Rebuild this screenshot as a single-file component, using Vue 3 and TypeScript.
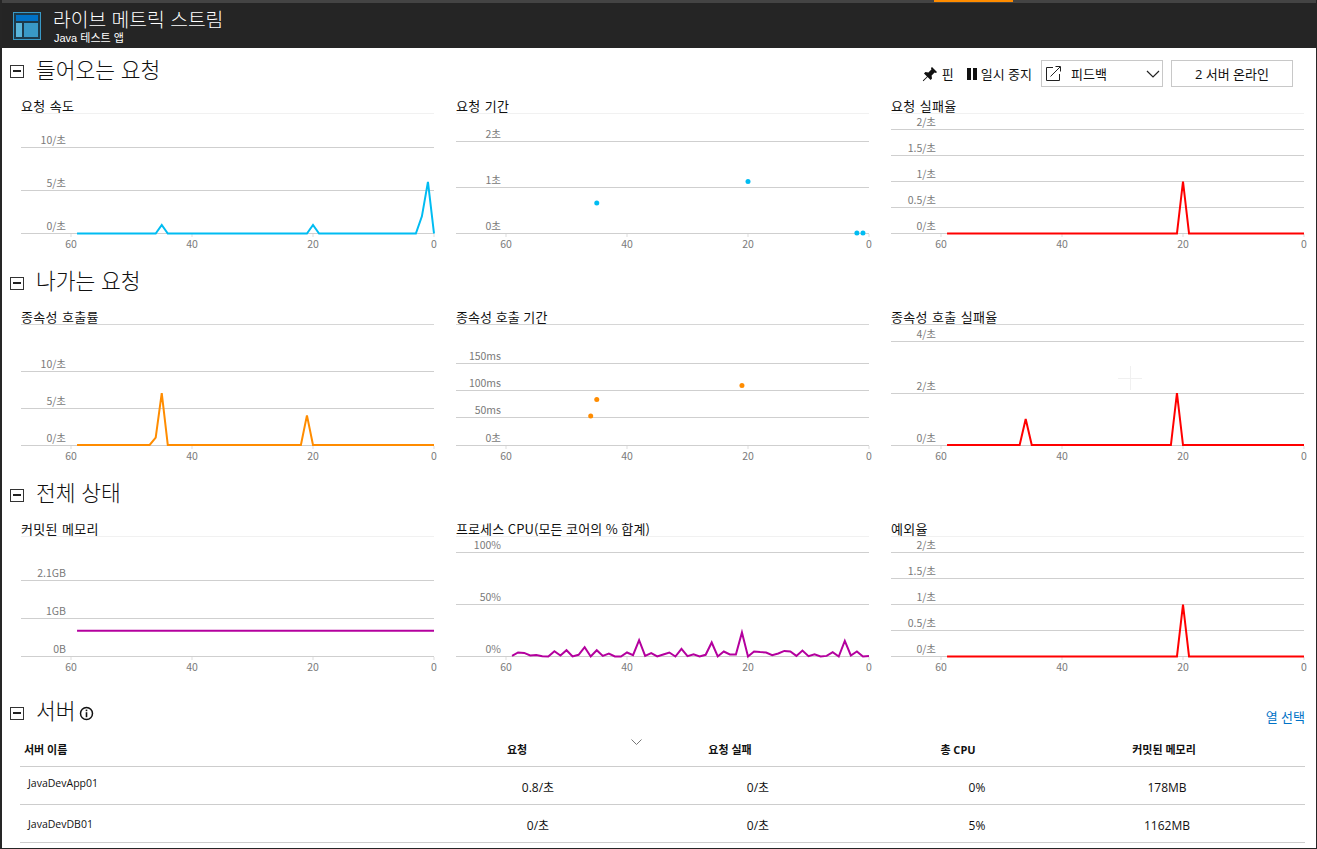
<script setup lang="ts">
interface GridLine {
  label: string;
  y: number;
}
interface Chart {
  title: string;
  tone: string;
  color: string;
  grid: GridLine[];
  line?: string;
  dots?: number[][];
}

const ticks = [60, 40, 20, 0];
const tx = (t: number) => 413 - t * 6.05;

// 값 배열(60개, 59초 전 -> 현재)을 폴리라인 좌표로 바꾼다
function toLine(values: Record<number, number>, base: number, unit: number): string {
  const pts: string[] = [];
  for (let t = 59; t >= 0; t--) {
    pts.push(`${tx(t).toFixed(2)},${(base - (values[t] ?? 0) * unit).toFixed(1)}`);
  }
  return pts.join(" ");
}

const cpu = [
  0.6, 3.8, 3.5, 1, 1.3, 0.3, 0, 5.1, 1, 6.1, 0, 1.6, 9, 0, 6.1, 0.6, 2.9, 0, 0, 3.8, 1.3, 15.7, 0.6, 3.2, 0, 1.9,
  3.8, 0, 7.4, 0.3, 2.2, 0, 1.6, 13.5, 0, 4.8, 1.9, 1.9, 23.1, 0, 4.8, 4.2, 3.8, 1.3, 2.9, 5.4, 4.8, 0.6, 5.8, 0.3,
  2.2, 0, 0.6, 4.2, 0, 15, 1, 4.8, 0, 0.6,
];
const cpuValues: Record<number, number> = {};
cpu.forEach((v, i) => {
  cpuValues[59 - i] = v;
});

const flat: Record<number, number> = {};
for (let t = 0; t < 60; t++) flat[t] = 1;

const rateGrid = (top: number): GridLine[] => [
  { label: "2/초", y: top },
  { label: "1.5/초", y: top + 26 },
  { label: "1/초", y: top + 52 },
  { label: "0.5/초", y: top + 78 },
  { label: "0/초", y: top + 104 },
];

const sections: { name: string; cls: string; charts: Chart[] }[] = [
  {
    name: "들어오는 요청",
    cls: "sec-first",
    charts: [
      {
        title: "요청 속도",
        tone: "faint",
        color: "#00bcf2",
        grid: [
          { label: "10/초", y: 33 },
          { label: "5/초", y: 76 },
          { label: "0/초", y: 119 },
        ],
        line: toLine({ 45: 1, 20: 1, 2: 2, 1: 6 }, 119.5, 8.6),
      },
      {
        title: "요청 기간",
        tone: "faint",
        color: "#00bcf2",
        grid: [
          { label: "2초", y: 27 },
          { label: "1초", y: 73 },
          { label: "0초", y: 119 },
        ],
        dots: [
          [45, 89],
          [20, 67.5],
          [2, 119],
          [1, 119],
        ],
      },
      {
        title: "요청 실패율",
        tone: "faint",
        color: "#ff0000",
        grid: rateGrid(15),
        line: toLine({ 20: 1 }, 119.5, 52),
      },
    ],
  },
  {
    name: "나가는 요청",
    cls: "sec-second",
    charts: [
      {
        title: "종속성 호출률",
        tone: "solid",
        color: "#ff8c00",
        grid: [
          { label: "10/초", y: 46 },
          { label: "5/초", y: 83 },
          { label: "0/초", y: 120 },
        ],
        line: toLine({ 46: 1, 45: 7, 21: 4 }, 120, 7.4),
      },
      {
        title: "종속성 호출 기간",
        tone: "solid tight",
        color: "#ff8c00",
        grid: [
          { label: "150ms", y: 38 },
          { label: "100ms", y: 65 },
          { label: "50ms", y: 92 },
          { label: "0초", y: 120 },
        ],
        dots: [
          [45, 74.5],
          [46, 91],
          [21, 60.5],
        ],
      },
      {
        title: "종속성 호출 실패율",
        tone: "solid",
        color: "#ff0000",
        grid: [
          { label: "4/초", y: 16 },
          { label: "2/초", y: 68 },
          { label: "0/초", y: 120 },
        ],
        line: toLine({ 46: 1, 21: 2 }, 120, 26),
      },
    ],
  },
  {
    name: "전체 상태",
    cls: "sec-third",
    charts: [
      {
        title: "커밋된 메모리",
        tone: "faint",
        color: "#b4009e",
        grid: [
          { label: "2.1GB", y: 43 },
          { label: "1GB", y: 81 },
          { label: "0B", y: 119 },
        ],
        line: toLine(flat, 93.7, 0),
      },
      {
        title: "프로세스 CPU(모든 코어의 % 합계)",
        tone: "faint tight",
        color: "#b4009e",
        grid: [
          { label: "100%", y: 15 },
          { label: "50%", y: 67 },
          { label: "0%", y: 119 },
        ],
        line: toLine(cpuValues, 119.5, 1.04),
      },
      {
        title: "예외율",
        tone: "faint",
        color: "#ff0000",
        grid: rateGrid(15),
        line: toLine({ 20: 1 }, 119.5, 52),
      },
    ],
  },
];

const servers = [
  { name: "JavaDevApp01", req: "0.8/초", fail: "0/초", cpu: "0%", mem: "178MB" },
  { name: "JavaDevDB01", req: "0/초", fail: "0/초", cpu: "5%", mem: "1162MB" },
];
</script>

<template>
  <div class="page">
    <header class="blade-head">
      <svg class="blade-icon" width="28" height="28" viewBox="0 0 28 28">
        <rect x="0.5" y="0.5" width="27" height="27" fill="#1d3a4a" stroke="#3999c6" />
        <rect x="3" y="3" width="22" height="6" fill="#0072c6" />
        <rect x="3" y="11" width="6" height="14" fill="#59b4d9" />
        <rect x="11" y="11" width="14" height="14" fill="#3999c6" />
      </svg>
      <div>
        <div class="blade-title">라이브 메트릭 스트림</div>
        <div class="blade-sub">Java 테스트 앱</div>
      </div>
      <div class="active-tab"></div>
    </header>

    <section v-for="sec in sections" :key="sec.name" class="sec" :class="sec.cls">
      <div class="sec-head">
        <span class="collapse"><i></i></span>
        <h2>{{ sec.name }}</h2>
        <div v-if="sec.cls === 'sec-first'" class="toolbar">
          <span class="tool">
            <svg width="16" height="16" viewBox="0 0 16 16">
              <path
                d="M10 1 15 6 14 7 12.6 6.6 9.6 9.6 10 12.6 8.6 14 5.6 11 1.4 15.2.8 14.6 5 10.4 2 7.4 3.4 6 6.4 6.4 9.4 3.4 9 2Z"
                fill="#111"
              />
            </svg>
            핀
          </span>
          <span class="tool tool-pause">
            <span class="pause"><i></i><i></i></span>
            일시 중지
          </span>
          <div class="select">
            <svg width="15" height="15" viewBox="0 0 15 15" fill="none" stroke="#222">
              <path d="M7 1.5H.5v13h13V8" />
              <path d="M4.500 10.500 14 1M9.500.5h5v5" />
            </svg>
            <span class="select-text">피드백</span>
            <svg class="chev" width="14" height="8" viewBox="0 0 14 8" fill="none" stroke="#222" stroke-width="1.2">
              <path d="M1 1l6 6 6-6" />
            </svg>
          </div>
          <div class="online">2 서버 온라인</div>
        </div>
      </div>

      <div class="charts">
        <div v-for="c in sec.charts" :key="c.title" class="chart">
          <div class="chart-title" :class="c.tone">{{ c.title }}</div>
          <svg width="413" height="147" viewBox="0 0 413 147" class="plot">
            <g v-for="g in c.grid" :key="g.label">
              <line x1="0" x2="413" :y1="g.y + 0.5" :y2="g.y + 0.5" class="grid-line" />
              <text x="45" :y="g.y - 3" text-anchor="end" class="y-label">{{ g.label }}</text>
            </g>
            <g v-for="t in ticks" :key="t">
              <line
                :x1="tx(t)"
                :x2="tx(t)"
                :y1="c.grid[c.grid.length - 1].y + 1"
                :y2="c.grid[c.grid.length - 1].y + 4"
                class="tick"
              />
              <text :x="tx(t)" :y="c.grid[c.grid.length - 1].y + 15" text-anchor="middle" class="x-label">{{ t }}</text>
            </g>
            <polyline v-if="c.line" :points="c.line" fill="none" :stroke="c.color" stroke-width="2" />
            <circle v-for="d in c.dots" :key="d[0]" :cx="tx(d[0])" :cy="d[1]" r="2.500" :fill="c.color" />
          </svg>
        </div>
      </div>
    </section>

    <section class="servers">
      <div class="sec-head">
        <span class="collapse"><i></i></span>
        <h2>서버</h2>
        <svg class="info" width="15" height="15" viewBox="0 0 15 15">
          <circle cx="7.500" cy="7.500" r="6" fill="none" stroke="#111" stroke-width="1.500" />
          <rect x="6.700" y="3.600" width="1.600" height="1.600" fill="#111" />
          <rect x="6.700" y="6.200" width="1.600" height="5" fill="#111" />
        </svg>
        <a class="pick">열 선택</a>
      </div>
      <div class="table">
        <svg class="sort" width="11" height="6" viewBox="0 0 11 6" fill="none" stroke="#777">
          <path d="M.5.500l5 5 5-5" />
        </svg>
        <div class="thead">
          <span class="th-name">서버 이름</span>
          <span>요청</span>
          <span>요청 실패</span>
          <span>총 CPU</span>
          <span>커밋된 메모리</span>
        </div>
        <div v-for="s in servers" :key="s.name" class="trow">
          <span class="td-name">{{ s.name }}</span>
          <span>{{ s.req }}</span>
          <span>{{ s.fail }}</span>
          <span>{{ s.cpu }}</span>
          <span>{{ s.mem }}</span>
        </div>
      </div>
    </section>

    <div class="crosshair"></div>
  </div>
</template>

<style scoped>
.page {
  position: relative;
  box-sizing: border-box;
  width: 1317px;
  height: 849px;
  overflow: hidden;
  background: #fff;
  border-left: 2px solid #262626;
  border-right: 1px solid #262626;
  border-bottom: 1px solid #262626;
  font-family: "Open Sans", "Noto Sans CJK KR", sans-serif;
  color: #111;
}
.blade-head {
  position: relative;
  display: flex;
  align-items: flex-start;
  box-sizing: border-box;
  height: 48px;
  margin-left: -2px;
  margin-right: -1px;
  padding: 9px 0 0 13px;
  gap: 12px;
  background: #252525;
  border-top: 3px solid #444;
  font-family: "Liberation Sans", "Noto Sans CJK KR", sans-serif;
  color: #fff;
}
.blade-icon {
  flex: none;
}
.blade-title {
  margin-top: -1px;
  font-size: 19.300px;
  line-height: 20px;
  font-weight: 300;
}
.blade-sub {
  margin: 1px 0 0 1px;
  font-size: 11px;
  line-height: 13px;
}
.active-tab {
  position: absolute;
  left: 934px;
  top: -3px;
  width: 79px;
  height: 2px;
  background: #ff8c00;
}
.sec {
  padding-left: 8px;
}
.sec-first {
  padding-top: 2px;
}
.sec-first .collapse {
  margin-top: 2px;
}
.sec-second {
  padding-bottom: 1px;
}
.sec-head {
  position: relative;
  display: flex;
  align-items: center;
  height: 40px;
}
.collapse {
  display: flex;
  align-items: center;
  justify-content: center;
  box-sizing: border-box;
  width: 14px;
  height: 13px;
  margin: 4px 12px 0 0;
  border: 1px solid #333;
  background: #fff;
}
.collapse i {
  display: block;
  width: 8px;
  height: 2px;
  background: #222;
}
h2 {
  margin: 0;
  font-size: 21.500px;
  line-height: 30px;
  font-weight: 300;
  color: #111;
}
.toolbar {
  position: absolute;
  top: 10px;
  right: 23px;
  display: flex;
  align-items: center;
  font-size: 13px;
}
.tool {
  display: flex;
  align-items: center;
  gap: 4px;
  margin-right: 13px;
}
.tool-pause {
  gap: 4px;
  margin-right: 9px;
}
.pause {
  display: flex;
  gap: 2px;
}
.pause i {
  display: block;
  width: 4px;
  height: 12px;
  background: #111;
}
.select,
.online {
  display: flex;
  align-items: center;
  box-sizing: border-box;
  height: 27px;
  width: 122px;
  border: 1px solid #c8c8c8;
}
.select {
  padding-left: 4px;
  margin-right: 8px;
}
.select-text {
  margin-left: 10px;
  flex: 1;
}
.chev {
  margin-right: 2px;
}
.online {
  justify-content: center;
}
.charts {
  display: grid;
  grid-template-columns: repeat(3, 413px);
  column-gap: 22px;
  padding-left: 11px;
}
.chart-title {
  box-sizing: border-box;
  height: 24px;
  padding-top: 9px;
  font-family: "Noto Sans CJK KR", sans-serif;
  font-size: 13px;
  line-height: 14px;
  letter-spacing: 0.3px;
  word-spacing: 1px;
  color: #111;
}
.tight {
  letter-spacing: 0.1px;
  word-spacing: 0.5px;
}
.plot {
  display: block;
  overflow: visible;
  border-top: 1px solid #f1f1f1;
  margin-top: -1px;
}
.solid + .plot {
  border-top-color: #d6d6d6;
}
.grid-line {
  stroke: #cfcfcf;
  stroke-width: 1;
}
.tick {
  stroke: #ddd;
  stroke-width: 1;
}
.y-label,
.x-label {
  font-family: "Noto Sans CJK KR", sans-serif;
  font-size: 10.500px;
  fill: #7a7a7a;
}
.servers {
  padding: 7px 11px 0 8px;
}
.info {
  margin: 4px 0 0 3px;
}
.pick {
  margin-left: auto;
  margin-top: 10px;
  font-size: 13px;
  color: #0072c6;
}
.table {
  position: relative;
  margin-left: 10px;
}
.sort {
  position: absolute;
  left: 611px;
  top: 8px;
}
.thead,
.trow {
  display: grid;
  text-align: center;
  border-bottom: 1px solid #cdcdcd;
}
.thead {
  grid-template-columns: 390px 214px 212px 244px 168px 1fr;
  height: 36px;
  padding-top: 12px;
  box-sizing: border-box;
  font-size: 11px;
  line-height: 14px;
  font-weight: 700;
  color: #111;
}
.th-name {
  text-align: left;
  padding-left: 4px;
}
.trow {
  grid-template-columns: 410px 216px 224px 214px 166px 1fr;
  box-sizing: border-box;
  height: 38px;
  padding-top: 12px;
  font-size: 12px;
  line-height: 18px;
}
.td-name {
  text-align: left;
  padding-left: 8px;
  margin-top: -5px;
  font-size: 10.500px;
}
.trow:last-child .td-name {
  margin-top: -2px;
}
.crosshair {
  position: absolute;
  left: 1116px;
  top: 366px;
  width: 24px;
  height: 24px;
  background: linear-gradient(#f0f0f0, #f0f0f0) center / 24px 1px no-repeat,
    linear-gradient(#f0f0f0, #f0f0f0) center / 1px 24px no-repeat;
}
</style>

<style>
html,
body {
  margin: 0;
  background: #fff;
}
</style>
